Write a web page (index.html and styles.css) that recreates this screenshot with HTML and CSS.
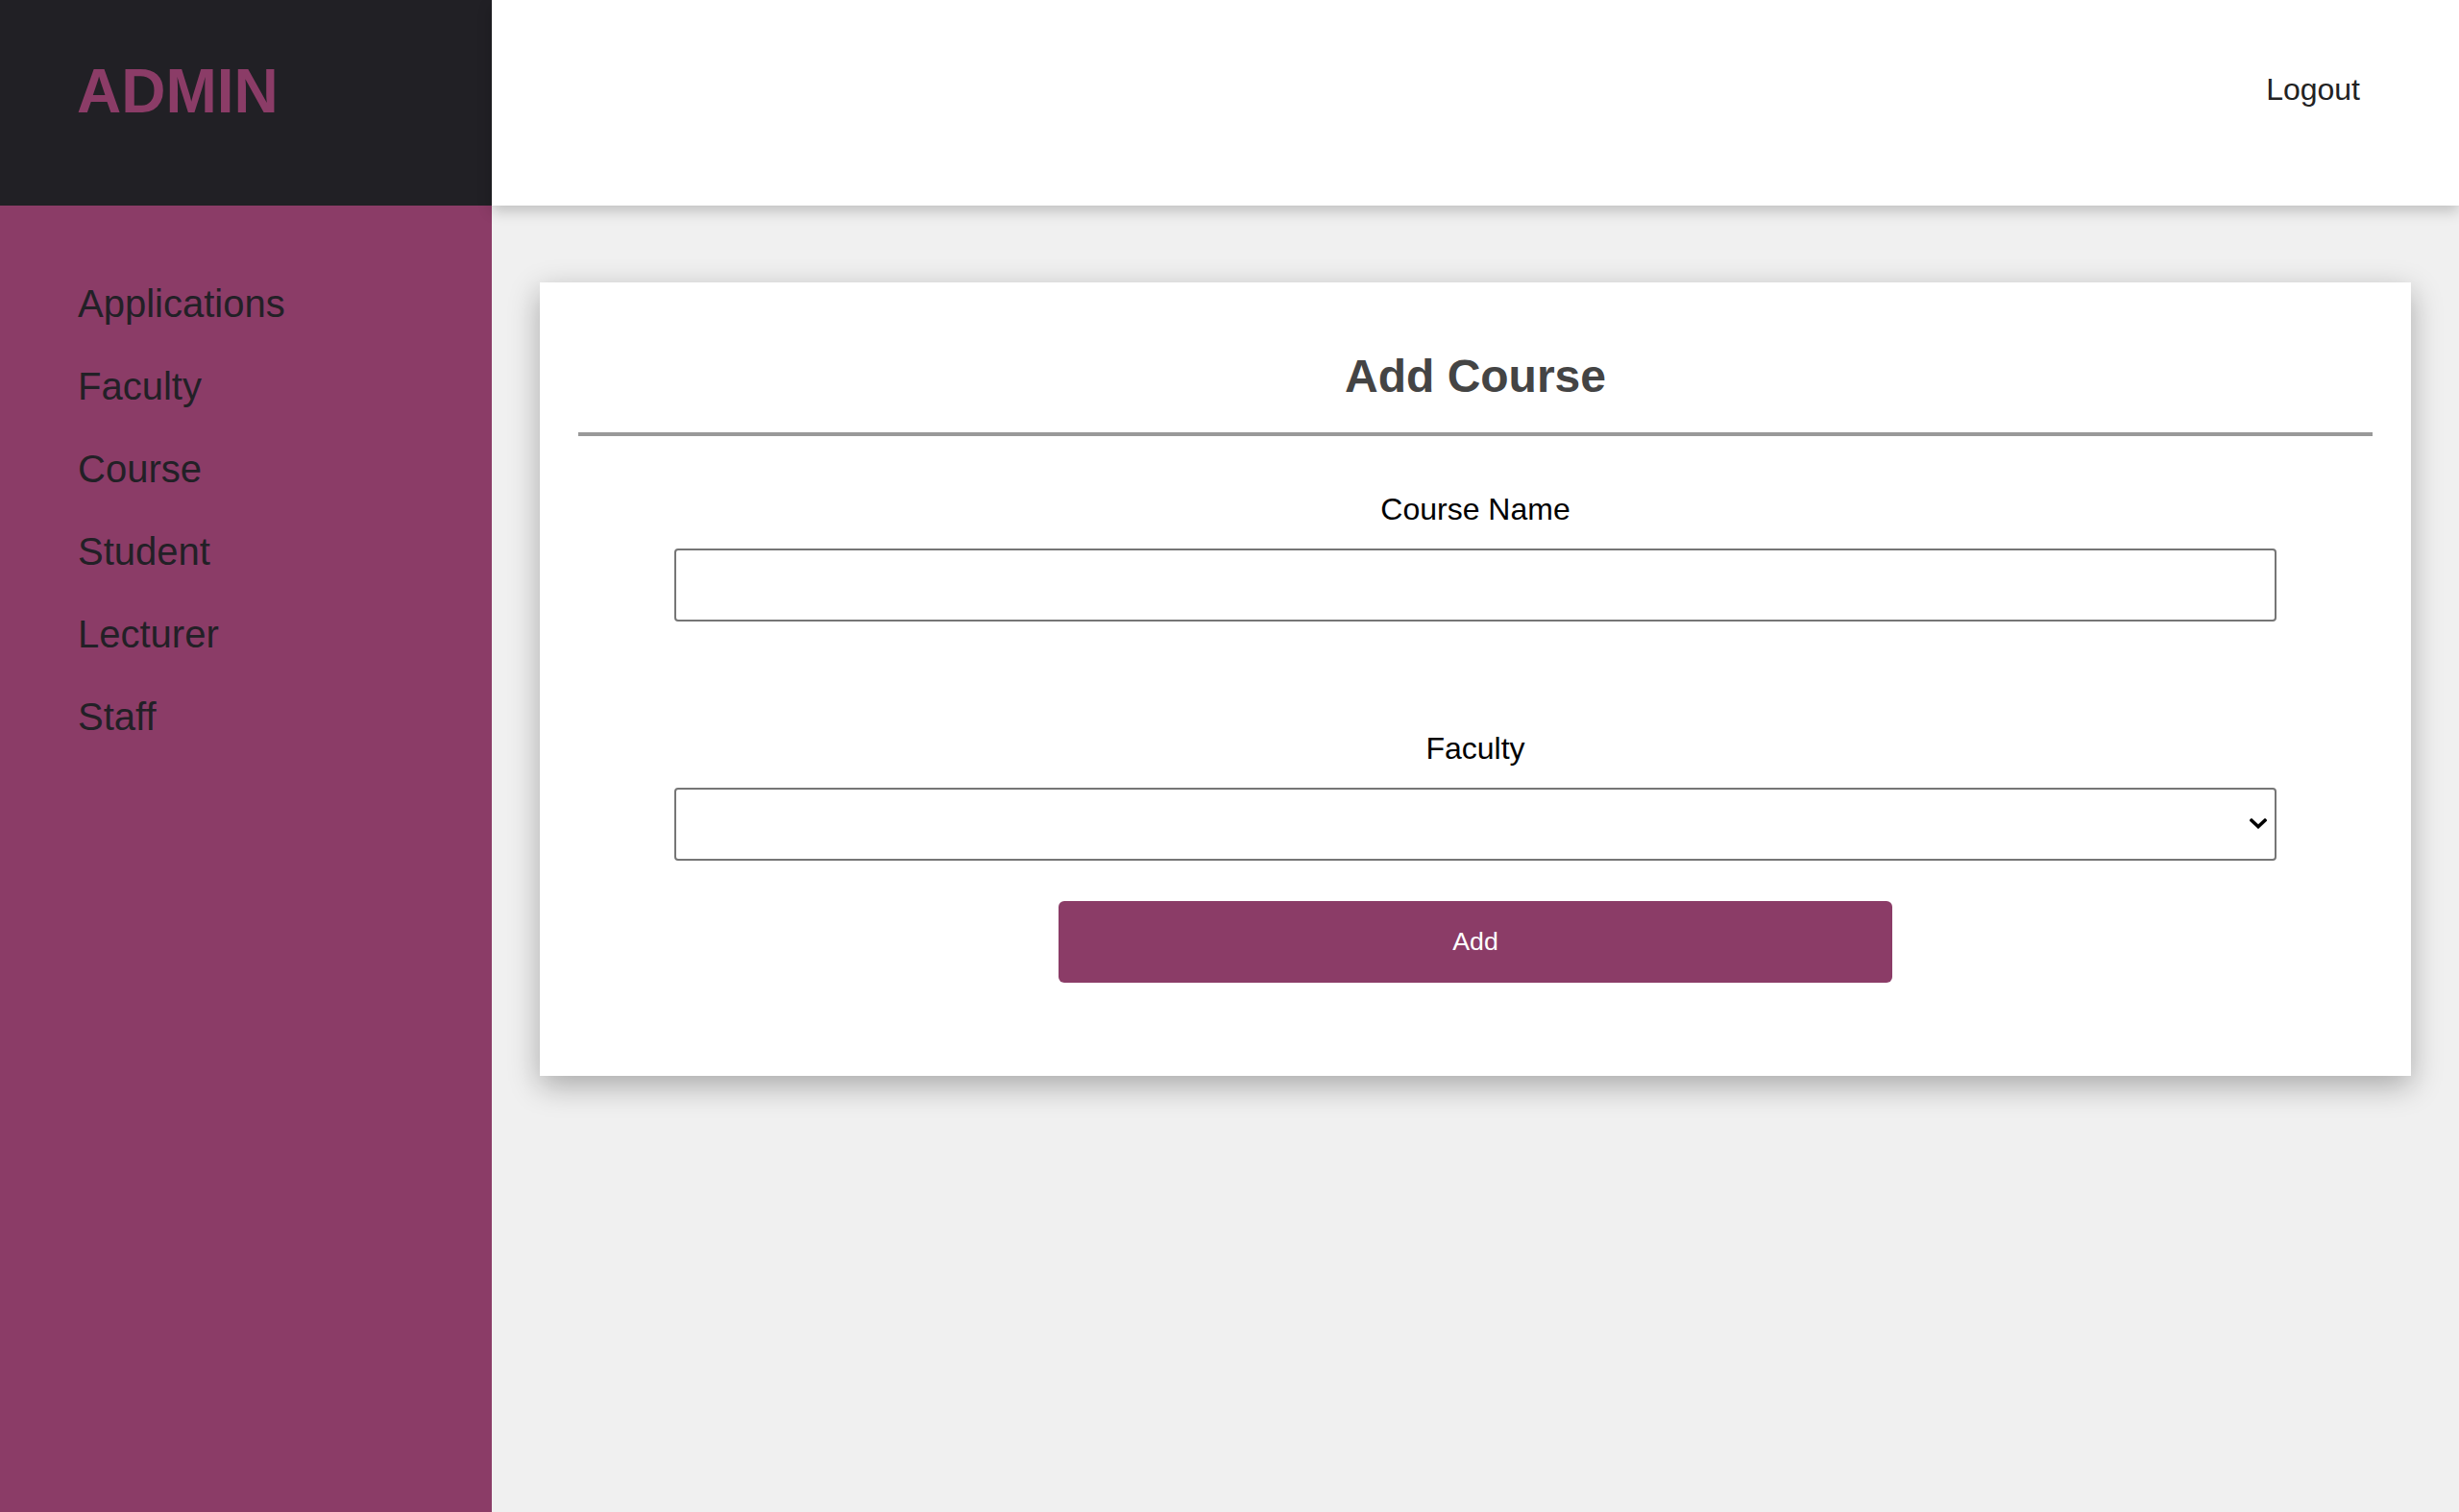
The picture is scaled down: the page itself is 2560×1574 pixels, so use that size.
FILE: index.html
```html
<!DOCTYPE html>
<html lang="en">
<head>
<meta charset="utf-8">
<title>Admin - Add Course</title>
<link rel="stylesheet" href="styles.css">
</head>
<body>
<div class="layout">
  <aside class="sidebar">
    <div class="brand"><h1 class="brand-title">ADMIN</h1></div>
    <nav class="nav">
      <a class="nav-link" href="#">Applications</a>
      <a class="nav-link" href="#">Faculty</a>
      <a class="nav-link" href="#">Course</a>
      <a class="nav-link" href="#">Student</a>
      <a class="nav-link" href="#">Lecturer</a>
      <a class="nav-link" href="#">Staff</a>
    </nav>
  </aside>
  <div class="main">
    <header class="topbar">
      <a class="logout" href="#">Logout</a>
    </header>
    <section class="content">
      <div class="card">
        <h2 class="card-title">Add Course</h2>
        <form class="form">
          <label class="label label-first" for="courseName">Course Name</label>
          <input class="field" id="courseName" type="text">
          <label class="label label-second" for="faculty">Faculty</label>
          <div class="select-wrap">
            <select class="field select" id="faculty"><option></option></select>
            <svg class="chevron" width="18" height="11" viewBox="0 0 18 11"><polyline points="2,2 9,8.5 16,2" fill="none" stroke="#000" stroke-width="3.6" stroke-linecap="square"/></svg>
          </div>
          <button class="btn" type="button">Add</button>
        </form>
      </div>
    </section>
  </div>
</div>
</body>
</html>
```

FILE: styles.css
```css
* { box-sizing: border-box; }
html, body { margin: 0; padding: 0; }
body {
  font-family: "Liberation Sans", Arial, sans-serif;
  background: #f0f0f0;
  color: #000;
}
.layout {
  display: flex;
  min-height: 100vh;
}
.sidebar {
  width: 512px;
  flex: 0 0 512px;
  background: #8b3c67;
  display: flex;
  flex-direction: column;
}
.brand {
  height: 214px;
  background: #212025;
  padding: 58px 0 0 80px;
}
.brand-title {
  margin: 0;
  font-size: 64px;
  line-height: 74px;
  font-weight: bold;
  color: #8b3c67;
}
.nav {
  display: flex;
  flex-direction: column;
  gap: 40px;
  padding: 79px 0 0 81px;
}
.nav-link {
  font-size: 40px;
  line-height: 46px;
  color: #222026;
  text-decoration: none;
}
.main {
  flex: 1;
  display: flex;
  flex-direction: column;
}
.topbar {
  height: 214px;
  background: #fff;
  display: flex;
  justify-content: flex-end;
  align-items: flex-start;
  padding: 75px 103px 0 0;
  box-shadow: 0 6px 14px rgba(0,0,0,0.2);
  position: relative;
  z-index: 1;
}
.logout {
  font-size: 32px;
  line-height: 37px;
  color: #222;
  text-decoration: none;
}
.content {
  padding: 80px 50px;
}
.card {
  background: #fff;
  padding: 0 40px 97px;
  box-shadow: 0 10px 30px rgba(0,0,0,0.3);
}
.card-title {
  margin: 0;
  padding: 70px 0 30px;
  font-size: 48px;
  line-height: 56px;
  font-weight: bold;
  color: #444;
  text-align: center;
  border-bottom: 4px solid #999;
}
.form {
  display: flex;
  flex-direction: column;
  align-items: stretch;
  padding: 0 100px;
}
.label {
  display: block;
  font-size: 32px;
  line-height: 37px;
  text-align: center;
  color: #000;
  margin-bottom: 22px;
}
.label-first { margin-top: 58px; }
.label-second { margin-top: 114px; }
.field {
  display: block;
  width: 100%;
  height: 76px;
  border: 2px solid #767676;
  border-radius: 4px;
  background: #fff;
  font-family: "Liberation Sans", Arial, sans-serif;
  font-size: 26px;
  padding: 0 10px;
  margin: 0;
}
.select-wrap {
  position: relative;
}
.select {
  -webkit-appearance: none;
  appearance: none;
}
.chevron {
  position: absolute;
  right: 10px;
  top: 32px;
  pointer-events: none;
}
.btn {
  align-self: center;
  width: 868px;
  height: 85px;
  margin-top: 42px;
  border: none;
  border-radius: 6px;
  background: #8b3c67;
  color: #fff;
  font-family: "Liberation Sans", Arial, sans-serif;
  font-size: 26.67px;
  cursor: pointer;
}
```
